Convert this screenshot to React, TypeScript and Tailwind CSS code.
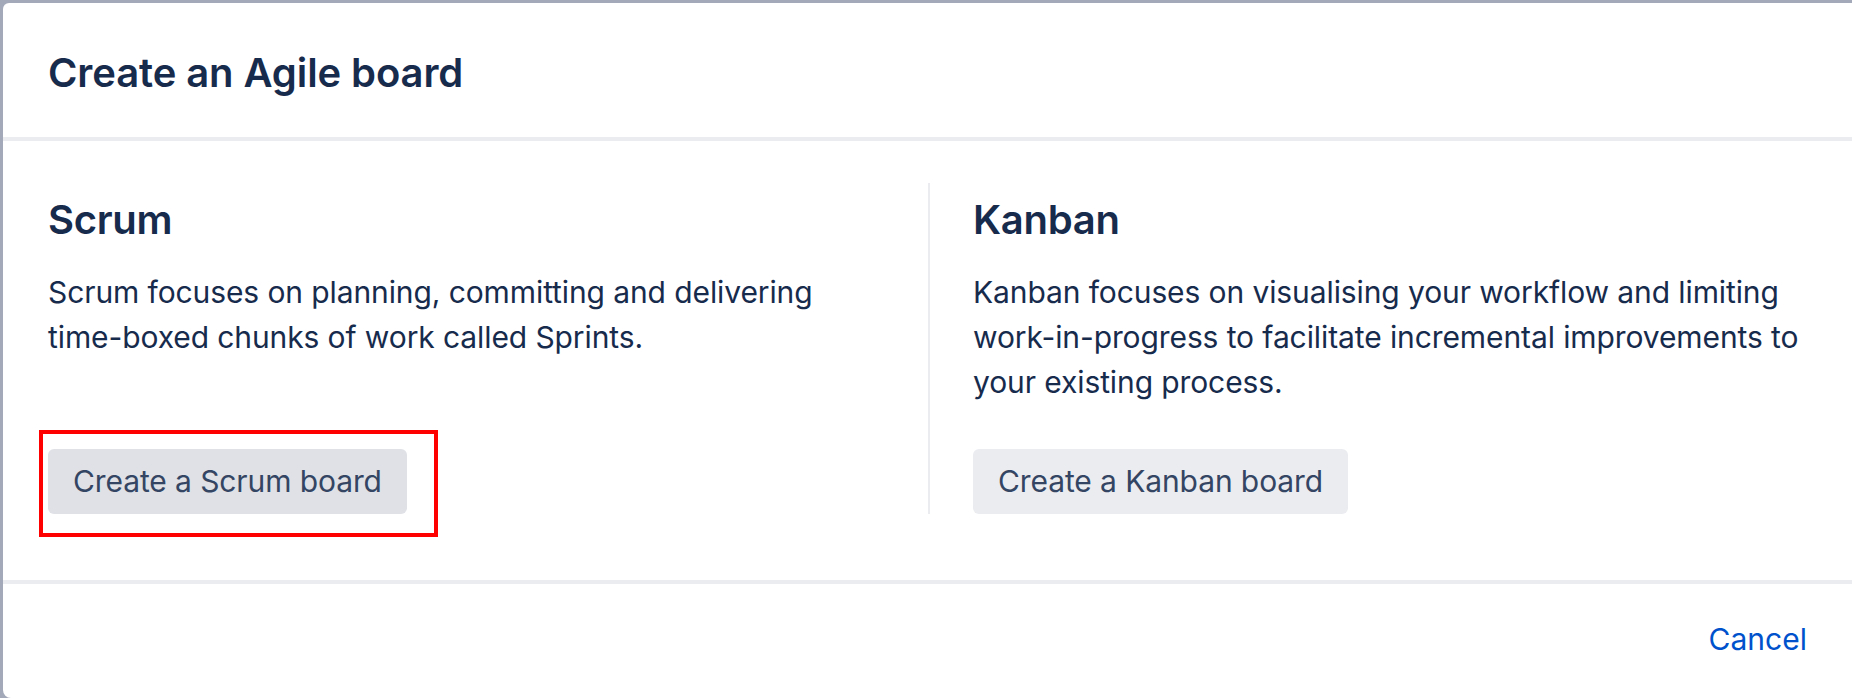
const App = () => {
  return (
    <div className="h-[698px] overflow-hidden bg-[#a3a9b8] pl-[3px] pt-[3px] font-['Inter',sans-serif]">
      <div className="flex h-[695px] flex-col rounded-tl-[6px] rounded-bl-[8px] bg-white">
        <header className="flex h-[134px] items-center px-[45px] pt-[6px]">
          <h1 className="text-[40px] font-semibold leading-[48px] tracking-[-0.1px] text-[#172b4d]">Create an Agile board</h1>
        </header>
        <div className="h-[4px] bg-[#ebecf0]" />

        <div className="grid grid-cols-[880px_1fr] pl-[45px] pr-[36px] pt-[42px]">
          <div className="flex flex-col pt-[13px] pr-[40px]">
            <h2 className="text-[40px] font-semibold leading-[48px] tracking-[-0.3px] text-[#172b4d]">Scrum</h2>
            <p className="mt-[26px] text-[30px] leading-[45px] tracking-[-0.1px] text-[#172b4d]">
              Scrum focuses on planning, committing and delivering time-boxed chunks of work called Sprints.
            </p>
            <div className="relative mt-auto self-start">
              <button className="h-[65px] rounded-[6px] bg-[#dfe1e6] px-[25px] text-[30px] tracking-[-0.1px] text-[#344563]">
                Create a Scrum board
              </button>
              <div className="pointer-events-none absolute -top-[19px] -bottom-[23px] -left-[9px] -right-[31px] border-[4px] border-[#ff0000]" />
            </div>
          </div>

          <div className="flex flex-col border-l-2 border-[#ebecf0] pt-[13px] pl-[43px]">
            <h2 className="text-[40px] font-semibold leading-[48px] tracking-[-0.3px] text-[#172b4d]">Kanban</h2>
            <p className="mt-[26px] text-[30px] leading-[45px] tracking-[-0.1px] text-[#172b4d]">
              Kanban focuses on visualising your workflow and limiting work-in-progress to facilitate incremental improvements to your existing process.
            </p>
            <button className="mt-[44px] h-[65px] self-start rounded-[6px] bg-[#ebecf0] px-[25px] text-[30px] tracking-[-0.1px] text-[#344563]">
              Create a Kanban board
            </button>
          </div>
        </div>

        <div className="mt-[66px] h-[4px] bg-[#ebecf0]" />
        <footer className="flex flex-1 items-center justify-end px-[45px] pb-[3px]">
          <button className="text-[30px] leading-[45px] text-[#0052cc]">Cancel</button>
        </footer>
      </div>
    </div>
  );
};

export default App;
